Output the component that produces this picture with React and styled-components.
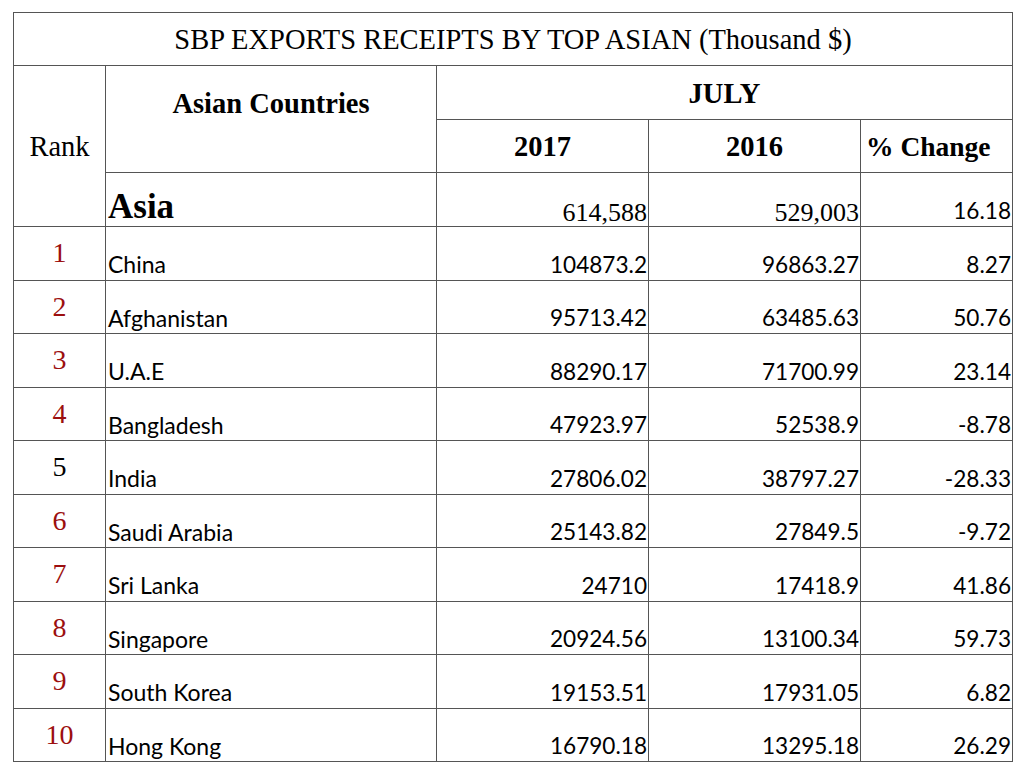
import styled, { createGlobalStyle } from 'styled-components';

const GlobalStyle = createGlobalStyle`
  html, body {
    margin: 0;
    padding: 0;
    background: #ffffff;
  }
`;

const Page = styled.div`
  padding: 12px 12px 0 13px;
`;

const Table = styled.table`
  border-collapse: collapse;
  table-layout: fixed;
  width: 999px;
  color: #000;
`;

const Row = styled.tr`
  height: ${(p) => p.$h || 53.5}px;
`;

// 제목 셀
const TitleCell = styled.td`
  border: 1px solid #555;
  text-align: center;
  vertical-align: middle;
  font-family: 'Liberation Serif', serif;
  font-size: 28.5px;
  padding-top: 3px;
  line-height: 1;
`;

const HeadCell = styled.td`
  border: 1px solid #555;
  border-left-color: ${(p) => (p.$soft ? '#aaa' : '#555')};
  font-family: 'Liberation Serif', serif;
  font-size: ${(p) => p.$size || 28.5}px;
  font-weight: ${(p) => (p.$bold ? 700 : 400)};
  text-align: ${(p) => p.$align || 'center'};
  vertical-align: ${(p) => p.$valign || 'middle'};
  padding: ${(p) => p.$pad || '0'};
  line-height: 1;
`;

const RankCell = styled.td`
  border: 1px solid #555;
  font-family: 'Liberation Serif', serif;
  font-size: 28px;
  text-align: center;
  vertical-align: top;
  padding-top: 12px;
  line-height: 1;
  color: ${(p) => (p.$plain ? '#000' : '#9c0f0f')};
`;

const NameCell = styled.td`
  border: 1px solid #555;
  font-family: ${(p) => (p.$serif ? "'Liberation Serif', serif" : "Lato, sans-serif")};
  font-size: ${(p) => p.$size || 23}px;
  font-weight: ${(p) => (p.$bold ? 700 : 400)};
  text-align: left;
  vertical-align: bottom;
  padding: 0 0 ${(p) => p.$bottom ?? 2}px 2px;
  line-height: 1.1;
`;

const NumCell = styled.td`
  border: 1px solid #555;
  border-left-color: ${(p) => (p.$soft ? '#999' : '#444')};
  font-family: ${(p) => (p.$serif ? "'Liberation Serif', serif" : "Lato, sans-serif")};
  font-size: ${(p) => (p.$serif ? 26 : 22.6)}px;
  text-align: right;
  vertical-align: bottom;
  padding: 0 1px ${(p) => (p.$serif ? 0 : 2)}px 0;
  line-height: ${(p) => (p.$serif ? 1 : 1.1)};
`;

const rows = [
  { rank: 1, name: 'China', y17: '104873.2', y16: '96863.27', ch: '8.27' },
  { rank: 2, name: 'Afghanistan', y17: '95713.42', y16: '63485.63', ch: '50.76' },
  { rank: 3, name: 'U.A.E', y17: '88290.17', y16: '71700.99', ch: '23.14' },
  { rank: 4, name: 'Bangladesh', y17: '47923.97', y16: '52538.9', ch: '-8.78' },
  { rank: 5, name: 'India', y17: '27806.02', y16: '38797.27', ch: '-28.33', plain: true },
  { rank: 6, name: 'Saudi Arabia', y17: '25143.82', y16: '27849.5', ch: '-9.72' },
  { rank: 7, name: 'Sri Lanka', y17: '24710', y16: '17418.9', ch: '41.86' },
  { rank: 8, name: 'Singapore', y17: '20924.56', y16: '13100.34', ch: '59.73' },
  { rank: 9, name: 'South Korea', y17: '19153.51', y16: '17931.05', ch: '6.82' },
  { rank: 10, name: 'Hong Kong', y17: '16790.18', y16: '13295.18', ch: '26.29' },
];

const App = () => {
  return (
    <Page>
      <GlobalStyle />
      <Table>
        <colgroup>
          <col style={{ width: 92 }} />
          <col style={{ width: 331 }} />
          <col style={{ width: 212 }} />
          <col style={{ width: 212 }} />
          <col style={{ width: 152 }} />
        </colgroup>
        <tbody>
          <Row $h={53}>
            <TitleCell colSpan={5}>SBP EXPORTS RECEIPTS BY TOP ASIAN (Thousand $)</TitleCell>
          </Row>
          <Row $h={54}>
            <HeadCell rowSpan={3} $pad="3px 0 0 0">Rank</HeadCell>
            <HeadCell rowSpan={2} $bold $valign="top" $pad="24px 0 0 0">
              Asian Countries
            </HeadCell>
            <HeadCell colSpan={3} $bold $pad="4px 0 0 0">JULY</HeadCell>
          </Row>
          <Row $h={53}>
            <HeadCell $bold $pad="2px 0 0 0">2017</HeadCell>
            <HeadCell $bold $soft $pad="2px 0 0 0">2016</HeadCell>
            <HeadCell $bold $align="left" $size={27.5} $pad="2px 0 0 5px">% Change</HeadCell>
          </Row>
          <Row $h={54}>
            <NameCell $serif $bold $size={35} $bottom={0}>Asia</NameCell>
            <NumCell $serif>614,588</NumCell>
            <NumCell $serif>529,003</NumCell>
            <NumCell>16.18</NumCell>
          </Row>
          {rows.map((r) => (
            <Row key={r.rank}>
              <RankCell $plain={r.plain}>{r.rank}</RankCell>
              <NameCell>{r.name}</NameCell>
              <NumCell>{r.y17}</NumCell>
              <NumCell $soft>{r.y16}</NumCell>
              <NumCell>{r.ch}</NumCell>
            </Row>
          ))}
        </tbody>
      </Table>
    </Page>
  );
};

export default App;
